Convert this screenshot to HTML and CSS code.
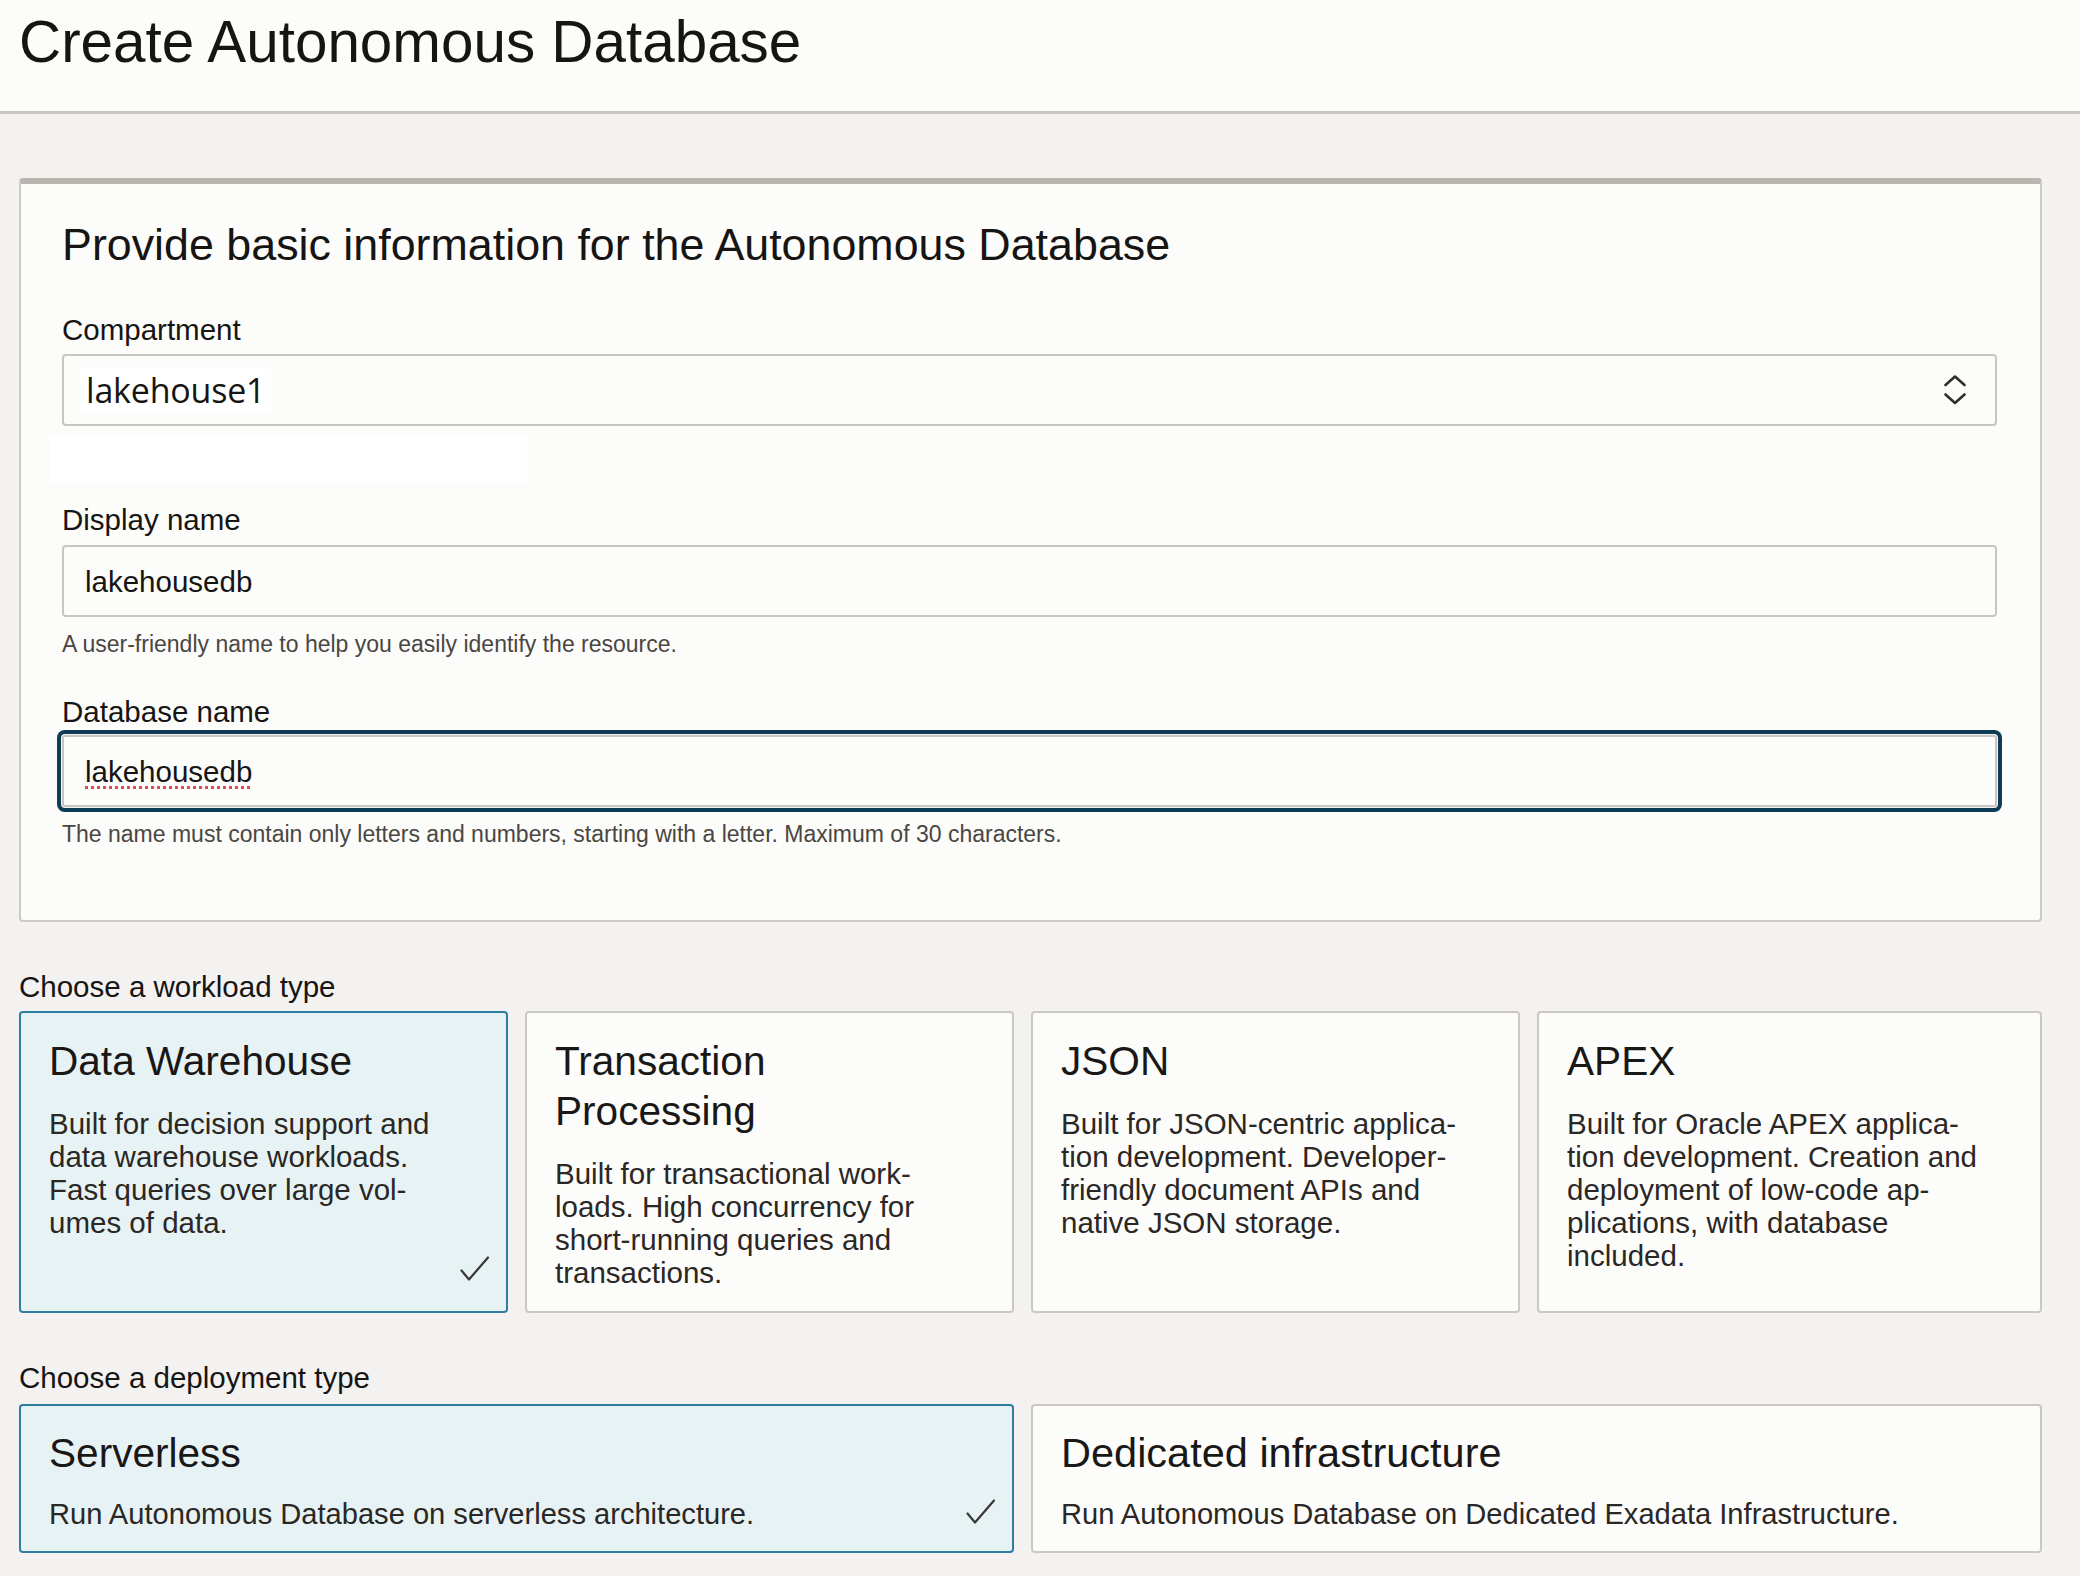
FILE: index.html
```html
<!DOCTYPE html>
<html lang="en">
<head>
<meta charset="utf-8">
<title>Create Autonomous Database</title>
<link rel="stylesheet" href="styles.css">
</head>
<body>
<header class="page-header">
  <h1 class="page-title">Create Autonomous Database</h1>
</header>
<main class="content">
  <section class="info-card">
    <h2 class="info-title">Provide basic information for the Autonomous Database</h2>

    <div class="field field-first">
      <div class="field-label">Compartment</div>
      <div class="select-box">
        <span class="select-value">lakehouse1</span>
        <svg class="select-chevrons" width="22" height="30" viewBox="0 0 22 30" aria-hidden="true">
          <path d="M1.5 10 L11 1.5 L20.5 10" fill="none" stroke="#312d2a" stroke-width="2.6" stroke-linecap="round" stroke-linejoin="round"/>
          <path d="M1.5 19.5 L11 28 L20.5 19.5" fill="none" stroke="#312d2a" stroke-width="2.6" stroke-linecap="round" stroke-linejoin="round"/>
        </svg>
      </div>
      <div class="patch"></div>
    </div>

    <div class="field field-display">
      <div class="field-label">Display name</div>
      <div class="text-input"><span class="input-value">lakehousedb</span></div>
      <p class="helper">A user-friendly name to help you easily identify the resource.</p>
    </div>

    <div class="field field-db">
      <div class="field-label">Database name</div>
      <div class="text-input focused"><span class="input-value misspelled">lakehousedb</span></div>
      <p class="helper">The name must contain only letters and numbers, starting with a letter. Maximum of 30 characters.</p>
    </div>
  </section>

  <div class="group-label">Choose a workload type</div>
  <div class="option-grid workload-grid">
    <div class="option-card selected">
      <div class="option-title">Data Warehouse</div>
      <div class="option-text">Built for decision support and<br>data warehouse workloads.<br>Fast queries over large vol-<br>umes of data.</div>
      <svg class="check" width="31" height="28" viewBox="0 0 31 28" aria-hidden="true">
        <path d="M2.5 15.5 L10 24.5 L29 2.5" fill="none" stroke="#3a3632" stroke-width="2.2" stroke-linecap="round" stroke-linejoin="round"/>
      </svg>
    </div>
    <div class="option-card">
      <div class="option-title">Transaction<br>Processing</div>
      <div class="option-text">Built for transactional work-<br>loads. High concurrency for<br>short-running queries and<br>transactions.</div>
    </div>
    <div class="option-card">
      <div class="option-title">JSON</div>
      <div class="option-text">Built for JSON-centric applica-<br>tion development. Developer-<br>friendly document APIs and<br>native JSON storage.</div>
    </div>
    <div class="option-card">
      <div class="option-title">APEX</div>
      <div class="option-text">Built for Oracle APEX applica-<br>tion development. Creation and<br>deployment of low-code ap-<br>plications, with database<br>included.</div>
    </div>
  </div>

  <div class="group-label group-label-deploy">Choose a deployment type</div>
  <div class="option-grid deploy-grid">
    <div class="option-card deploy-card deploy-left selected">
      <div class="option-title">Serverless</div>
      <div class="option-text deploy-text">Run Autonomous Database on serverless architecture.</div>
      <svg class="check check-deploy" width="31" height="28" viewBox="0 0 31 28" aria-hidden="true">
        <path d="M2.5 15.5 L10 24.5 L29 2.5" fill="none" stroke="#3a3632" stroke-width="2.2" stroke-linecap="round" stroke-linejoin="round"/>
      </svg>
    </div>
    <div class="option-card deploy-card deploy-right">
      <div class="option-title deploy-title-wide">Dedicated infrastructure</div>
      <div class="option-text deploy-text">Run Autonomous Database on Dedicated Exadata Infrastructure.</div>
    </div>
  </div>
</main>
</body>
</html>
```

FILE: styles.css
```css
* {
  box-sizing: border-box;
}

html, body {
  margin: 0;
  padding: 0;
}

body {
  background: #f3f2f1;
  color: #161513;
  font-family: "Liberation Sans", Arial, Helvetica, sans-serif;
  width: 2080px;
  min-height: 1576px;
}

.page-header {
  height: 114px;
  background: #fcfcfb;
  border-bottom: 3px solid #c8c5c1;
  padding: 13px 0 0 19px;
}

.page-title {
  margin: 0;
  font-size: 58.4px;
  line-height: 58px;
  font-weight: 400;
  color: #161513;
}

.content {
  padding: 64px 38px 0 19px;
}

.info-card {
  background: #fcfcfb;
  border: 2px solid #cdc9c4;
  border-top: 6px solid #bab5af;
  border-radius: 4px;
  padding: 34px 43px 72px 41px;
}

.info-title {
  margin: 0;
  font-size: 44.8px;
  line-height: 53px;
  font-weight: 400;
  color: #161513;
}

.field-first {
  margin-top: 42px;
}

.field-label {
  font-size: 29.5px;
  line-height: 34px;
  color: #161513;
}

.select-box {
  margin-top: 7px;
  height: 72px;
  border: 2px solid #c9c5c0;
  border-radius: 4px;
  background: #fcfcfb;
  display: flex;
  align-items: center;
  justify-content: space-between;
  padding: 0 29px 0 16px;
}

.select-value {
  background: #ffffff;
  font-family: "Open Sans", "Noto Sans", sans-serif;
  font-size: 34px;
  line-height: 47px;
  padding: 0 6px 0 6px;
  color: #161513;
  letter-spacing: -0.2px;
}

.select-chevrons {
  display: block;
}

.patch {
  margin-top: 10px;
  margin-left: -12px;
  width: 477px;
  height: 46px;
  background: #ffffff;
}

.field-display {
  margin-top: 21px;
}

.text-input {
  margin-top: 8px;
  height: 72px;
  border: 2px solid #c9c5c0;
  border-radius: 4px;
  background: #fcfcfb;
  display: flex;
  align-items: center;
  padding: 0 0 0 21px;
}

.text-input.focused {
  margin-top: 6px;
  box-shadow: 0 0 0 1px #f4f3f2, 0 0 0 5px #0f3c55;
  border-radius: 3px;
}

.input-value {
  font-size: 29.5px;
  line-height: 33px;
  color: #161513;
}

.misspelled {
  text-decoration: underline dotted #e5484d;
  text-decoration-thickness: 3px;
  text-underline-offset: 4px;
}

.helper {
  margin: 13px 0 0 0;
  font-size: 23px;
  line-height: 28px;
  color: #4a4642;
}

.field-db {
  margin-top: 37px;
}

.group-label {
  margin-top: 48px;
  font-size: 29.5px;
  line-height: 34px;
  color: #161513;
}

.option-grid {
  display: grid;
  grid-template-columns: 489px 489px 489px 1fr;
  column-gap: 17px;
}

.workload-grid {
  margin-top: 7px;
}

.deploy-grid {
  margin-top: 9px;
}

.option-card {
  position: relative;
  background: #fcfcfb;
  border: 2px solid #cbc7c2;
  border-radius: 4px;
  padding: 23px 24px 22px 28px;
  min-height: 301px;
}

.option-card.selected {
  background: #e7f2f5;
  border-color: #2f7ea1;
}

.option-title {
  font-size: 40.6px;
  line-height: 50px;
  color: #1a1816;
  white-space: nowrap;
}

.option-text {
  margin-top: 21px;
  font-size: 29.5px;
  line-height: 33px;
  color: #2a2724;
  white-space: nowrap;
}

.check {
  position: absolute;
  right: 16px;
  bottom: 28px;
}

.deploy-card {
  min-height: 149px;
  padding: 22px 24px 20px 28px;
}

.deploy-text {
  margin-top: 20px;
  font-size: 29.1px;
}

.deploy-title-wide {
  font-size: 41.5px;
}

.check-deploy {
  bottom: 25px;
}

.deploy-left {
  grid-column: 1 / span 2;
}

.deploy-right {
  grid-column: 3 / span 2;
  padding-left: 28px;
}
```
